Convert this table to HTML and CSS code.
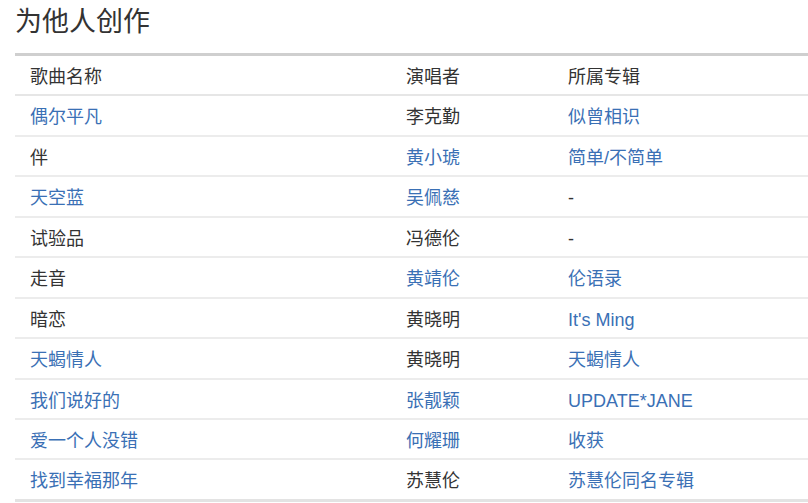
FILE: index.html
```html
<!DOCTYPE html>
<html lang="zh">
<head>
<meta charset="utf-8">
<link rel="stylesheet" href="styles.css">
</head>
<body>
<div class="page">
  <h2 class="title">为他人创作</h2>
  <table class="songs">
    <colgroup><col class="c1"><col class="c2"><col class="c3"></colgroup>
    <thead>
      <tr><th>歌曲名称</th><th>演唱者</th><th>所属专辑</th></tr>
    </thead>
    <tbody>
      <tr><td><a href="#">偶尔平凡</a></td><td>李克勤</td><td><a href="#">似曾相识</a></td></tr>
      <tr><td>伴</td><td><a href="#">黄小琥</a></td><td><a href="#">简单/不简单</a></td></tr>
      <tr><td><a href="#">天空蓝</a></td><td><a href="#">吴佩慈</a></td><td>-</td></tr>
      <tr><td>试验品</td><td>冯德伦</td><td>-</td></tr>
      <tr><td>走音</td><td><a href="#">黄靖伦</a></td><td><a href="#">伦语录</a></td></tr>
      <tr><td>暗恋</td><td>黄晓明</td><td><a href="#">It's Ming</a></td></tr>
      <tr><td><a href="#">天蝎情人</a></td><td>黄晓明</td><td><a href="#">天蝎情人</a></td></tr>
      <tr><td><a href="#">我们说好的</a></td><td><a href="#">张靓颖</a></td><td><a href="#">UPDATE*JANE</a></td></tr>
      <tr><td><a href="#">爱一个人没错</a></td><td><a href="#">何耀珊</a></td><td><a href="#">收获</a></td></tr>
      <tr><td><a href="#">找到幸福那年</a></td><td>苏慧伦</td><td><a href="#">苏慧伦同名专辑</a></td></tr>
    </tbody>
  </table>
</div>
</body>
</html>
```
FILE: styles.css
```css
html, body {
  margin: 0;
  padding: 0;
  background: #fff;
}
body {
  font-family: "Liberation Sans", Arial, "Noto Sans CJK SC", sans-serif;
  color: #333;
  font-size: 18px;
}
.page {
  padding: 4px 0 0 15px;
}
.title {
  margin: 0 0 13px 0;
  font-size: 27px;
  line-height: 36px;
  font-weight: normal;
  color: #333;
}
.songs {
  border-collapse: collapse;
  table-layout: fixed;
  width: 820px;
  border-bottom: 3px solid #e3e3e3;
}
.c1 { width: 376px; }
.c2 { width: 162px; }
.songs th,
.songs td {
  text-align: left;
  font-weight: normal;
  padding: 10px 15px 6px;
  line-height: 22.44px;
  vertical-align: middle;
  white-space: nowrap;
}
.songs thead th {
  border-top: 3px solid #cfcfcf;
  border-bottom: 2px solid #e6e6e6;
}
.songs tbody td {
  border-top: 2px solid #ececec;
}
.songs tbody tr:first-child td {
  border-top: none;
}
.songs a {
  color: #3a70b5;
  text-decoration: none;
}
```
